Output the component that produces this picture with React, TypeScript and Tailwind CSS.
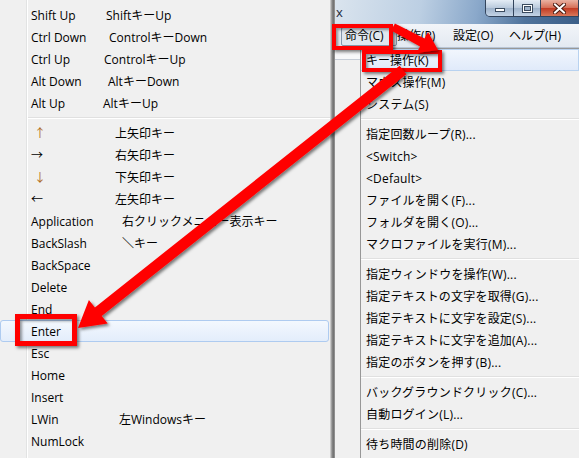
import React from "react";

type LeftItem = {
  label?: string;
  key?: string;
  w?: string;
  tone?: string;
  sep?: boolean;
  active?: boolean;
};

const leftItems: LeftItem[] = [
  { label: "Shift Up", key: "ShiftキーUp", w: "w-[75px]" },
  { label: "Ctrl Down", key: "ControlキーDown", w: "w-[78px]" },
  { label: "Ctrl Up", key: "ControlキーUp", w: "w-[73px]" },
  { label: "Alt Down", key: "AltキーDown", w: "w-[77px]" },
  { label: "Alt Up", key: "AltキーUp", w: "w-[72px]" },
  { sep: true },
  { label: "↑", key: "上矢印キー", w: "w-[84px]", tone: "text-[#b06a20] pl-[3px]" },
  { label: "→", key: "右矢印キー", w: "w-[84px]" },
  { label: "↓", key: "下矢印キー", w: "w-[84px]", tone: "text-[#b06a20] pl-[3px]" },
  { label: "←", key: "左矢印キー", w: "w-[84px]" },
  { label: "Application", key: "右クリックメニュー表示キー", w: "w-[91px]" },
  { label: "BackSlash", key: "＼キー", w: "w-[91px]" },
  { label: "BackSpace" },
  { label: "Delete" },
  { label: "End" },
  { label: "Enter", active: true },
  { label: "Esc" },
  { label: "Home" },
  { label: "Insert" },
  { label: "LWin", key: "左Windowsキー", w: "w-[88px]" },
  { label: "NumLock" },
];

type RightItem = { label?: string; sep?: boolean; active?: boolean };

const rightItems: RightItem[] = [
  { label: "キー操作(K)", active: true },
  { label: "マウス操作(M)" },
  { label: "システム(S)" },
  { sep: true },
  { label: "指定回数ループ(R)..." },
  { label: "<Switch>" },
  { label: "<Default>" },
  { label: "ファイルを開く(F)..." },
  { label: "フォルダを開く(O)..." },
  { label: "マクロファイルを実行(M)..." },
  { sep: true },
  { label: "指定ウィンドウを操作(W)..." },
  { label: "指定テキストの文字を取得(G)..." },
  { label: "指定テキストに文字を設定(S)..." },
  { label: "指定テキストに文字を追加(A)..." },
  { label: "指定のボタンを押す(B)..." },
  { sep: true },
  { label: "バックグラウンドクリック(C)..." },
  { label: "自動ログイン(L)..." },
  { sep: true },
  { label: "待ち時間の削除(D)" },
];

const menuBar = ["命令(C)", "操作(P)", "設定(O)", "ヘルプ(H)"];

function Separator({ indent }: { indent: string }) {
  return (
    <div className={`h-[8px] flex flex-col justify-center ${indent}`}>
      <div className="h-px bg-[#e0e0e0]" />
      <div className="h-px bg-white" />
    </div>
  );
}

export default function App() {
  return (
    <div className="relative w-[579px] h-[458px] overflow-hidden flex bg-[#f0f0f0] text-[12px] leading-none text-black font-['Open_Sans','Noto_Sans_CJK_JP',sans-serif]">
      {/* key submenu */}
      <div className="w-[331px] shrink-0 flex flex-col pt-[4px] border-r border-[#c9c9c9] bg-[linear-gradient(to_right,transparent_26px,#e2e3e3_26px,#e2e3e3_27px,#ffffff_27px,#ffffff_28px,transparent_28px)]">
        {leftItems.map((it, i) =>
          it.sep ? (
            <Separator key={i} indent="ml-[28px]" />
          ) : (
            <div
              key={i}
              className={
                it.active
                  ? "h-[22px] flex items-center pt-[2px] pl-[30px] mr-[1px] rounded-[3px] border border-[#aecbf0] bg-[linear-gradient(#f3f8fe,#e3edfb)]"
                  : "h-[22px] flex items-center pt-[2px] pl-[31px]"
              }
            >
              <span className={`${it.w ?? ""} ${it.tone ?? ""}`}>{it.label}</span>
              {it.key && <span>{it.key}</span>}
            </div>
          )
        )}
      </div>

      {/* menu shadow */}
      <div className="w-[4px] shrink-0 bg-[linear-gradient(to_right,#b0b0b0,#6c6c6c_55%,#9c9c9c)]" />

      {/* main window */}
      <div className="flex-1 min-w-0 flex flex-col">
        <div className="h-[24px] shrink-0 flex items-start bg-[linear-gradient(100deg,#dae4ee_0%,#bccfe3_35%,#8aa8ca_58%,#4f739c_78%,#3b5e88_100%)]">
          <span className="pl-[1px] pt-[6px] text-[13px] text-[#1d2a3a]">x</span>
          <div className="ml-auto flex h-[17px] border border-t-0 border-[#33445c] rounded-bl-[5px] overflow-hidden">
            <div className="w-[28px] flex items-end justify-center pb-[4px] border-r border-[#33445c] bg-[linear-gradient(#e4ecf5,#b9c9dc_50%,#9fb3cb_51%,#c3d3e6)]">
              <div className="w-[10px] h-[4px] bg-white border border-[#3a4a5e]" />
            </div>
            <div className="w-[27px] flex items-center justify-center border-r border-[#33445c] bg-[linear-gradient(#e4ecf5,#b9c9dc_50%,#9fb3cb_51%,#c3d3e6)]">
              <div className="w-[11px] h-[9px] border border-[#3a4a5e] bg-white p-[1px]">
                <div className="w-full h-full bg-[#9fb3cb] border border-[#3a4a5e]" />
              </div>
            </div>
            <div className="w-[37px] flex items-center justify-center bg-[linear-gradient(#eab2a2,#d56d55_50%,#c23a22_51%,#d9775a)]">
              <svg width="13" height="11" viewBox="0 0 13 11">
                <path d="M2 1.5 L11 9.5 M11 1.5 L2 9.5" stroke="#4a1a10" strokeWidth="4" strokeLinecap="square" />
                <path d="M2 1.5 L11 9.5 M11 1.5 L2 9.5" stroke="#ffffff" strokeWidth="2" strokeLinecap="square" />
              </svg>
            </div>
          </div>
        </div>

        <div className="h-[24px] shrink-0 flex items-center pl-[10px] pt-[1px] border-b border-[#b9c6d6] bg-[linear-gradient(#f2f5f9,#e3e9f1)]">
          {menuBar.map((m, i) => (
            <div
              key={m}
              className={
                i === 0
                  ? "w-[56px] h-[19px] flex items-center -ml-[4px] pl-[3px] border border-[#8597ad] bg-[#dfe6ee] rounded-[2px]"
                  : "w-[56px] flex items-center"
              }
            >
              {m}
            </div>
          ))}
        </div>

        <div className="flex-1 min-h-0 flex">
          <div className="w-[25px] shrink-0 flex flex-col">
            <div className="h-[12px] bg-[#f7f8fa] border-b border-[#c5ccd6]" />
            <div className="flex-1 bg-[#f0f0f0]" />
          </div>

          {/* command menu */}
          <div className="flex-1 min-w-0 flex flex-col border-l border-t border-[#979797] bg-[#f0f0f0]">
            {rightItems.map((it, i) =>
              it.sep ? (
                <Separator key={i} indent="ml-0" />
              ) : (
                <div
                  key={i}
                  className={
                    it.active
                      ? "h-[22px] flex items-center pt-[2px] pl-[5px] border border-l-0 border-[#b8d2f0] bg-[linear-gradient(#f1f6fd,#e0eafa)]"
                      : "h-[22px] flex items-center pt-[2px] pl-[5px] whitespace-nowrap tracking-[0.2px]"
                  }
                >
                  {it.label}
                </div>
              )
            )}
          </div>
        </div>
      </div>

      {/* annotation boxes */}
      <div className="absolute left-[332px] top-[24px] w-[61px] h-[26px] border-[4px] border-[#ff0000] shadow-[2px_2px_3px_rgba(0,0,0,0.5),inset_2px_2px_3px_rgba(0,0,0,0.4)]" />
      <div className="absolute left-[362px] top-[50px] w-[80px] h-[22px] border-[4px] border-[#ff0000] shadow-[2px_2px_3px_rgba(0,0,0,0.5),inset_2px_2px_3px_rgba(0,0,0,0.4)]" />
      <div className="absolute left-[15px] top-[314px] w-[62px] h-[32px] border-[5px] border-[#ff0000] shadow-[2px_2px_3px_rgba(0,0,0,0.5),inset_2px_2px_3px_rgba(0,0,0,0.4)]" />

      {/* annotation arrows */}
      <svg className="absolute left-0 top-0 pointer-events-none" width="579" height="458" viewBox="0 0 579 458">
        <defs>
          <filter id="sh" x="-10%" y="-10%" width="120%" height="120%">
            <feDropShadow dx="2" dy="2" stdDeviation="1.5" floodColor="#000" floodOpacity="0.5" />
          </filter>
        </defs>
        <polygon
          filter="url(#sh)"
          fill="#ff0000"
          points="438,50 416.5,53 420,46.5 391.2,30.5 394.9,23.5 424.5,38.5 428,32"
        />
        <polygon
          filter="url(#sh)"
          fill="#ff0000"
          points="78,328 107.7,323.4 101.7,316 406.4,74.3 399.6,65.7 94.9,307.4 88.9,300"
        />
      </svg>
    </div>
  );
}
